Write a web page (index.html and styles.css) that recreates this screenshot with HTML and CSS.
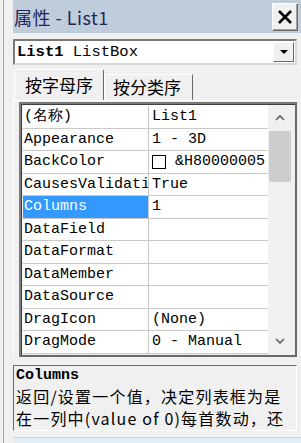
FILE: index.html
```html
<!DOCTYPE html>
<html>
<head>
  <title>属性 - List1</title>
  <link rel="stylesheet" href="styles.css">
</head>
<body>
  <div class="window">
    <div class="titlebar">
      <span class="title">属性 - List1</span>
      <button class="close-button">
        <svg width="16" height="16" viewBox="0 0 16 16">
          <path d="M2 2 L14 14 M14 2 L2 14" stroke="#000" stroke-width="2.6" fill="none"/>
        </svg>
      </button>
    </div>

    <div class="combo">
      <span class="combo-text"><b>List1</b> ListBox</span>
      <span class="combo-button">
        <svg width="8" height="5" viewBox="0 0 8 5"><path d="M0 0 H8 L4 4 Z" fill="#000"/></svg>
      </span>
    </div>

    <div class="tabs">
      <div class="tab active">按字母序</div>
      <div class="tab">按分类序</div>
    </div>

    <div class="page">
      <div class="grid">
        <div class="rows">
          <div class="row"><div class="name">(名称)</div><div class="value">List1</div></div>
          <div class="row"><div class="name">Appearance</div><div class="value">1 - 3D</div></div>
          <div class="row"><div class="name">BackColor</div><div class="value"><span class="swatch"></span>&amp;H80000005</div></div>
          <div class="row"><div class="name">CausesValidati</div><div class="value">True</div></div>
          <div class="row selected"><div class="name">Columns</div><div class="value">1</div></div>
          <div class="row"><div class="name">DataField</div><div class="value"></div></div>
          <div class="row"><div class="name">DataFormat</div><div class="value"></div></div>
          <div class="row"><div class="name">DataMember</div><div class="value"></div></div>
          <div class="row"><div class="name">DataSource</div><div class="value"></div></div>
          <div class="row"><div class="name">DragIcon</div><div class="value">(None)</div></div>
          <div class="row"><div class="name">DragMode</div><div class="value">0 - Manual</div></div>
        </div>
        <div class="scrollbar">
          <svg class="arrow" width="10" height="6" viewBox="0 0 10 6"><path d="M1 5 L5 1 L9 5" stroke="#606060" stroke-width="1.6" fill="none"/></svg>
          <div class="thumb"></div>
          <div class="track"></div>
          <svg class="arrow" width="10" height="6" viewBox="0 0 10 6"><path d="M1 1 L5 5 L9 1" stroke="#606060" stroke-width="1.6" fill="none"/></svg>
        </div>
      </div>
    </div>

    <div class="description">
      <div class="desc-title">Columns</div>
      <div class="desc-text">返回/设置一个值，决定列表框为是</div>
      <div class="desc-text">在一列中(value of 0)每首数动，还</div>
    </div>

    <div class="statusbar"></div>
  </div>
</body>
</html>
```

FILE: styles.css
```css
body {
  margin: 0;
  background-color: #f0f0f0;
  font-family: "Liberation Mono", monospace;
  color: #000;
  width: 301px;
  height: 443px;
  overflow: hidden;
}

.window {
  margin-left: 3px;
  border-left: 1px solid #a8a8a8;
  padding-left: 9px;
  height: 443px;
}

.titlebar {
  height: 33px;
  background-color: #bfcddb;
  display: flex;
  align-items: center;
  justify-content: space-between;
  padding-right: 3px;
}

.title {
  font-family: "Noto Sans CJK SC", sans-serif;
  font-size: 18px;
  letter-spacing: 0.5px;
  color: #25235a;
  padding-left: 1px;
}

.close-button {
  width: 26px;
  height: 28px;
  padding: 0;
  background-color: #f0f0f0;
  border: 1px solid;
  border-color: #ffffff #6a6a6a #6a6a6a #ffffff;
  box-shadow: inset -1px -1px 0 #a0a0a0;
  display: flex;
  align-items: center;
  justify-content: center;
}

.combo {
  margin: 6px 4px 0 0;
  height: 26px;
  box-sizing: border-box;
  background-color: #fff;
  border: 2px solid;
  border-color: #7a7a7a #d8d8d8 #d8d8d8 #7a7a7a;
  display: flex;
  align-items: center;
  justify-content: space-between;
}

.combo-text {
  font-size: 15.5px;
  padding-left: 2px;
}

.combo-button {
  width: 21px;
  height: 20px;
  box-sizing: border-box;
  margin-right: 1px;
  background-color: #f0f0f0;
  border: 1px solid;
  border-color: #ffffff #6a6a6a #6a6a6a #ffffff;
  display: flex;
  align-items: center;
  justify-content: center;
}

.tabs {
  display: flex;
  align-items: flex-end;
  margin-top: 4px;
  height: 31px;
}

.tab {
  font-family: "Noto Sans CJK SC", sans-serif;
  font-size: 17px;
  line-height: 24px;
  padding: 0 11px 0 8px;
  border: 1px solid;
  border-bottom: none;
  border-color: #ffffff #6a6a6a #ffffff #ffffff;
  height: 25px;
}

.tab.active {
  height: 30px;
  line-height: 30px;
  margin-left: 1px;
  padding: 0 10px;
  border-radius: 2px 2px 0 0;
}

.page {
  margin-right: 4px;
  border-top: 1px solid #fff;
  border-left: 1px solid #fff;
  padding: 1px 0 0 5px;
}

.grid {
  display: flex;
  height: 255px;
  box-sizing: border-box;
  border: 2px solid;
  border-color: #7a7a7a #6a6a6a #6a6a6a #7a7a7a;
  box-shadow: inset 1px 1px 0 #404040;
  padding: 1px 3px 2px 2px;
  background-color: #f0f0f0;
}

.rows {
  width: 246px;
  background-color: #fff;
  padding-top: 1px;
}

.row {
  display: flex;
  height: 22.5px;
  box-sizing: border-box;
  border-bottom: 1px solid #c8c8c8;
  font-size: 15px;
  line-height: 21px;
  white-space: nowrap;
}

.name {
  width: 126px;
  padding-left: 1px;
  overflow: hidden;
  border-right: 1px solid #c8c8c8;
  box-sizing: border-box;
}

.value {
  flex: 1;
  padding-left: 3px;
  overflow: hidden;
  display: flex;
  align-items: center;
}

.selected .name {
  background-color: #3399ff;
  color: #fff;
}

.swatch {
  display: inline-block;
  width: 12px;
  height: 12px;
  border: 1px solid #000;
  background-color: #fff;
  margin-right: 9px;
}

.scrollbar {
  width: 24px;
  display: flex;
  flex-direction: column;
  align-items: center;
  background-color: #f0f0f0;
}

.arrow {
  margin: 10px 0 9px;
}

.scrollbar .thumb {
  width: 22px;
  height: 51px;
  margin-top: 1px;
  background-color: #cdcdcd;
  border-radius: 2px;
}

.scrollbar .track {
  flex: 1;
}

.description {
  margin: 8px 4px 0 0;
  height: 66px;
  box-sizing: border-box;
  border: 1px solid;
  border-color: #6a6a6a #ffffff #ffffff #6a6a6a;
  padding: 2px 2px 0 2px;
  overflow: hidden;
}

.desc-title {
  font-size: 15px;
  font-weight: bold;
  line-height: 16px;
  margin-bottom: 1px;
}

.desc-text {
  font-family: "Noto Sans CJK SC", sans-serif;
  font-size: 16px;
  line-height: 22px;
  letter-spacing: 1.2px;
  white-space: nowrap;
}

.statusbar {
  margin-top: 6px;
  height: 10px;
  border-top: 1px solid #c8d4e0;
  background-color: #e4ecf4;
}
```
